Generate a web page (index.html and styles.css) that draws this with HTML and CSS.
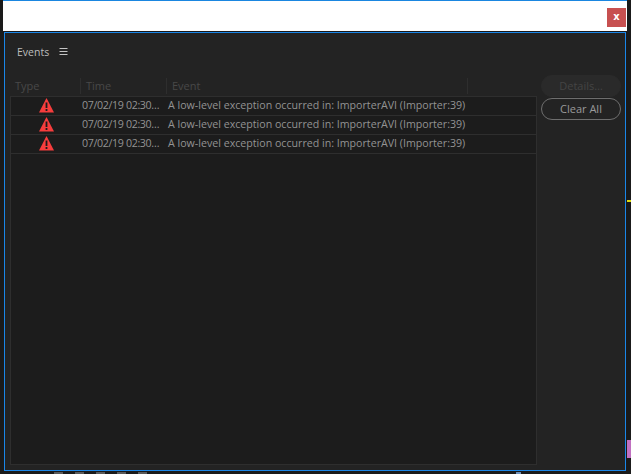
FILE: index.html
```html
<!DOCTYPE html>
<html lang="en">
<head>
<meta charset="utf-8">
<title>Events</title>
<link rel="stylesheet" href="styles.css">
</head>
<body>
<div class="window">
  <div class="titlebar"><button class="close">x</button></div>
  <div class="panel">
    <div class="tabbar">
      <span class="tab">Events</span>
      <svg class="menu" width="9" height="8" viewBox="0 0 9 8"><path d="M0.5 0.5h8M0.5 3.5h8M0.5 6.5h8" stroke="#c4c4c4" stroke-width="1" fill="none"/></svg>
    </div>
    <div class="content">
      <div class="list">
        <div class="head">
          <span class="col-type">Type</span>
          <span class="col-time">Time</span>
          <span class="col-event">Event</span>
        </div>
        <div class="rows">
          <div class="row">
            <span class="col-type"><svg class="warn" width="15" height="15" viewBox="0 0 15 15"><path d="M7.5 0L15 14.5H0Z" fill="#f63d3d"/><path d="M6.6 4.5h1.8v5.5H6.6zM6.6 11h1.8v2H6.6z" fill="#1c1c1c"/></svg></span>
            <span class="col-time">07/02/19 02:30…</span>
            <span class="col-event">A low-level exception occurred in: ImporterAVI (Importer:39)</span>
          </div>
          <div class="row">
            <span class="col-type"><svg class="warn" width="15" height="15" viewBox="0 0 15 15"><path d="M7.5 0L15 14.5H0Z" fill="#f63d3d"/><path d="M6.6 4.5h1.8v5.5H6.6zM6.6 11h1.8v2H6.6z" fill="#1c1c1c"/></svg></span>
            <span class="col-time">07/02/19 02:30…</span>
            <span class="col-event">A low-level exception occurred in: ImporterAVI (Importer:39)</span>
          </div>
          <div class="row">
            <span class="col-type"><svg class="warn" width="15" height="15" viewBox="0 0 15 15"><path d="M7.5 0L15 14.5H0Z" fill="#f63d3d"/><path d="M6.6 4.5h1.8v5.5H6.6zM6.6 11h1.8v2H6.6z" fill="#1c1c1c"/></svg></span>
            <span class="col-time">07/02/19 02:30…</span>
            <span class="col-event">A low-level exception occurred in: ImporterAVI (Importer:39)</span>
          </div>
        </div>
      </div>
      <div class="actions">
        <button class="btn btn-off">Details…</button>
        <button class="btn">Clear All</button>
      </div>
    </div>
  </div>
</div>
<div class="peek peek-yellow"></div>
<div class="peek peek-pink"></div>
<div class="peek peek-blue"></div>
<div class="peek peek-marks">
  <span></span><span></span><span></span><span></span><span></span>
</div>
</body>
</html>
```
FILE: styles.css
```css
* { box-sizing: border-box; }
html, body { margin: 0; height: 474px; overflow: hidden; }
body {
  background: #1a1a1a;
  font-family: "Open Sans", "Noto Sans", sans-serif;
  font-size: 11px;
  position: relative;
}
.window { margin-left: 3px; width: 624px; }
.titlebar {
  height: 31px;
  background: #fff;
  border-top: 1px solid #1a86e0;
  position: relative;
}
.close {
  position: absolute;
  right: 1px;
  top: 7px;
  width: 19px;
  height: 19px;
  padding: 0 0 2px;
  border: 0;
  background: #c75050;
  color: #fff;
  font: bold 10px "DejaVu Sans", sans-serif;
}
.panel {
  margin: 1px 0 0 1px;
  width: 622px;
  height: 439px;
  background: #232323;
  border: 1px solid #1a86e8;
  display: flex;
  flex-direction: column;
}
.tabbar {
  height: 38px;
  padding: 0 0 0 12px;
  display: flex;
  align-items: center;
  gap: 10px;
  flex: none;
}
.tab { color: #bdbdbd; font-size: 10.5px; }
.content {
  flex: 1;
  display: flex;
  padding: 4px 4px 5px 4px;
  min-height: 0;
}
.list { width: 528px; flex: none; display: flex; flex-direction: column; }
.head {
  height: 21px;
  display: flex;
  align-items: center;
  color: #484848;
  font-size: 11px;
  flex: none;
}
.head span { height: 16px; line-height: 16px; }
.head .col-type { padding-left: 6px; }
.head .col-time, .head .col-event { border-left: 1px solid #2e2e2e; padding-left: 5px; }
.head .col-event { width: 302px; border-right: 1px solid #2e2e2e; }
.col-type { width: 71px; flex: none; }
.col-time { width: 86px; flex: none; }
.col-event { flex: none; white-space: nowrap; }
.rows {
  flex: 1;
  margin-left: 1px;
  background: #1c1c1c;
  border: 1px solid #2e2e2e;
  min-height: 0;
}
.row {
  height: 19px;
  border-bottom: 1px solid #2e2e2e;
  padding-bottom: 2px;
  display: flex;
  align-items: center;
  color: #939393;
  font-size: 10.65px;
}
.row .col-type { width: 71px; padding-right: 1px; display: flex; justify-content: center; }
.row .col-time { width: 86px; overflow: hidden; letter-spacing: -0.35px; }
.warn { display: block; }
.actions {
  margin-left: 4px;
  width: 81px;
  display: flex;
  flex-direction: column;
  gap: 1px;
}
.btn {
  width: 80px;
  height: 22px;
  border-radius: 11px;
  background: transparent;
  border: 1px solid #6e6e6e;
  color: #9a9a9a;
  padding: 0 0 2px;
  font: 11px "Open Sans", "Noto Sans", sans-serif;
}
.btn-off { background: #2a2a2a; border-color: #2a2a2a; color: #444; }
.peek { position: absolute; }
.peek-yellow { left: 627px; top: 200px; width: 4px; height: 2px; background: #dcdc14; }
.peek-pink { left: 627px; top: 440px; width: 4px; height: 18px; background: #c070c0; }
.peek-blue { left: 516px; top: 472px; width: 5px; height: 2px; background: #6f90b8; }
.peek-marks { left: 54px; top: 472px; display: flex; gap: 12px; }
.peek-marks span { width: 9px; height: 2px; background: #5a5a5a; }
```
